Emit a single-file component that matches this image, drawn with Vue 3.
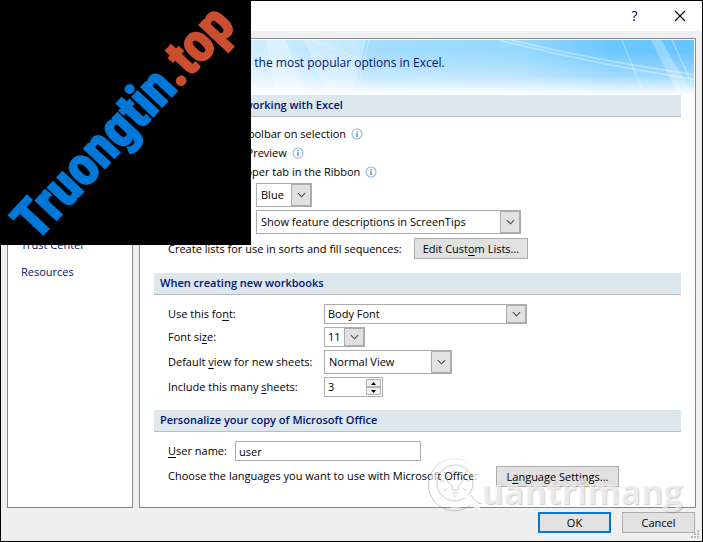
<script setup>
import { ref } from 'vue'

const scheme = ref('Blue')
const tipStyle = ref('Show feature descriptions in ScreenTips')
const font = ref('Body Font')
const size = ref('11')
const view = ref('Normal View')
const sheets = ref(3)
const user = ref('user')
const categories = ['Popular', 'Formulas', 'Proofing', 'Save', 'Advanced', 'Customize', 'Add-Ins', 'Trust Center', 'Resources']
const toggles = ref([
  { label: 'Show Mini Toolbar on selection', on: true },
  { label: 'Enable Live Preview', on: true },
  { label: 'Show Developer tab in the Ribbon', on: false },
])
</script>

<template>
  <main class="dialog">
    <header class="titlebar">
      <button class="cap" aria-label="Help">?</button>
      <button class="cap" aria-label="Close">
        <svg width="12" height="12" viewBox="0 0 12 12"><path d="M1 1 11 11M11 1 1 11" stroke="#000" stroke-width="1.1" /></svg>
      </button>
    </header>

    <div class="body">
      <nav class="nav">
        <a v-for="c in categories" :key="c" href="#">{{ c }}</a>
      </nav>

      <div class="panel">
        <div class="banner">
          <svg class="sky" viewBox="0 0 553 56" preserveAspectRatio="none" aria-hidden="true">
            <defs>
              <linearGradient id="h" x1="0" x2="1" y1="0" y2="0">
                <stop offset="0" stop-color="#e2f4ff" /><stop offset=".25" stop-color="#cdecff" />
                <stop offset=".42" stop-color="#a4dcff" /><stop offset=".68" stop-color="#98d8ff" />
                <stop offset=".85" stop-color="#6cc7ff" /><stop offset="1" stop-color="#66c4ff" />
              </linearGradient>
              <linearGradient id="v" x1="0" x2="0" y1="0" y2="1">
                <stop offset=".2" stop-color="#fff" stop-opacity="0" /><stop offset=".65" stop-color="#fff" stop-opacity=".35" />
                <stop offset="1" stop-color="#fff" />
              </linearGradient>
            </defs>
            <path d="M0 0H553V56H0z" fill="url(#h)" />
            <g fill="#fff" fill-opacity=".28">
              <path d="M125 0h20l22 56h-32zM163 0h52l-14 56h-14zM215 0h10l-14 56h-10z" />
              <path d="M510 0h10l32 56h-15z" />
            </g>
            <g fill="none" stroke="#fff" stroke-opacity=".32">
              <path d="M171 0 220 20M228 0 216 56" />
              <path d="M358 0 Q450 24 553 40" stroke-width="2" /><path d="M370 0 Q460 22 553 35" stroke-width="2" />
              <path d="M481 0 503 56M531 0 551 45" stroke-width="1.5" />
            </g>
            <path d="M0 0H553V56H0z" fill="url(#v)" />
          </svg>
          <h1>Change the most popular options in Excel.</h1>
        </div>

        <section>
          <h2>Top options for working with Excel</h2>
          <div class="rows">
            <label v-for="t in toggles" :key="t.label" class="toggle">
              <input v-model="t.on" type="checkbox" />
              <span>{{ t.label }}</span>
              <svg width="12" height="12" viewBox="0 0 12 12" aria-hidden="true">
                <circle cx="6" cy="6" r="5" fill="#fff" stroke="#8fb4de" stroke-width="1.1" />
                <path d="M6 3v1.2M6 5.2V9" stroke="#456fa5" stroke-width="1.2" />
              </svg>
            </label>
            <div class="row tall">
              <label class="short" for="scheme">Color scheme:</label>
              <span class="combo w-blue"><select id="scheme" v-model="scheme"><option>Blue</option></select><i><svg viewBox="0 0 10 6"><path d="M1 1 5 5 9 1" /></svg></i></span>
            </div>
            <div class="row tall">
              <label class="short" for="tip">ScreenTip style:</label>
              <span class="combo w-tip"><select id="tip" v-model="tipStyle"><option>Show feature descriptions in ScreenTips</option></select><i><svg viewBox="0 0 10 6"><path d="M1 1 5 5 9 1" /></svg></i></span>
            </div>
            <div class="row list">
              <span class="wide">Create lists for use in sorts and fill sequences:</span>
              <button class="btn lists">Edit Cust<u>o</u>m Lists...</button>
            </div>
          </div>
        </section>

        <section>
          <h2>When creating new workbooks</h2>
          <div class="rows">
            <div class="row">
              <label class="mid" for="font">Use this fo<u>n</u>t:</label>
              <span class="combo w-font"><select id="font" v-model="font"><option>Body Font</option></select><i><svg viewBox="0 0 10 6"><path d="M1 1 5 5 9 1" /></svg></i></span>
            </div>
            <div class="row">
              <label class="mid" for="size">Font si<u>z</u>e:</label>
              <span class="combo w-size"><select id="size" v-model="size"><option>11</option></select><i><svg viewBox="0 0 10 6"><path d="M1 1 5 5 9 1" /></svg></i></span>
            </div>
            <div class="row tall">
              <label class="mid" for="view">Default <u>v</u>iew for new sheets:</label>
              <span class="combo w-view"><select id="view" v-model="view"><option>Normal View</option></select><i><svg viewBox="0 0 10 6"><path d="M1 1 5 5 9 1" /></svg></i></span>
            </div>
            <div class="row">
              <label class="mid" for="sheets">Include this many <u>s</u>heets:</label>
              <span class="spin">
                <input id="sheets" v-model="sheets" type="text" />
                <span class="steps">
                  <button aria-label="More" @click="sheets++"><svg width="5" height="3" viewBox="0 0 5 3"><path d="M0 3 2.500 0 5 3z" /></svg></button>
                  <button aria-label="Fewer" @click="sheets--"><svg width="5" height="3" viewBox="0 0 5 3"><path d="M0 0 2.500 3 5 0z" /></svg></button>
                </span>
              </span>
            </div>
          </div>
        </section>

        <section>
          <h2>Personalize your copy of Microsoft Office</h2>
          <div class="rows">
            <div class="row">
              <label class="name" for="user"><u>U</u>ser name:</label>
              <input id="user" v-model="user" class="text" type="text" />
            </div>
            <div class="row tall">
              <span class="lang">Choose the languages you want to use with Microsoft Office:</span>
              <button class="btn langs">L<u>a</u>nguage Settings...</button>
            </div>
          </div>
        </section>
      </div>
    </div>

    <footer class="actions">
      <button class="btn action primary">OK</button>
      <button class="btn action">Cancel</button>
    </footer>

    <svg class="grip" width="9" height="9" viewBox="0 0 9 9" fill="#bdbdbd" aria-hidden="true">
      <path d="M6 0h2v2H6zM3 3h2v2H3zM6 3h2v2H6zM0 6h2v2H0zM3 6h2v2H3zM6 6h2v2H6z" />
    </svg>

    <div class="watermark">
      <svg width="56" height="58" viewBox="0 0 56 58" fill="none" aria-hidden="true">
        <g stroke="#888" stroke-opacity=".45" transform="translate(0 1)">
          <path d="M39 5A26 26 0 1 0 44 47" /><circle cx="27" cy="26" r="18" />
        </g>
        <circle cx="27" cy="27" r="22" stroke="#fff" stroke-opacity=".6" stroke-width="6" />
        <g stroke="#aaa" stroke-opacity=".6">
          <path d="M24 34v-4q-5-3-5-7a8 8 0 0 1 16 0q0 4-5 7v4zM24 37h6M25 40h4M15 15l3 3M39 15l-3 3M12 25h4M42 25h-4M16 35l3-3M38 35l-3-3" />
        </g>
        <path d="M38 40Q44 50 52 51" stroke="#fff" stroke-opacity=".8" stroke-width="5" />
        <path d="M43 39Q47 47 54 48" stroke="#888" stroke-opacity=".45" />
      </svg>
      <span>uantrimang</span>
    </div>

    <div class="stamp"><p>Truongtin<b>.top</b></p></div>
  </main>
</template>

<style>
body { margin: 0; }
</style>

<style scoped>
* { box-sizing: border-box; }
.dialog {
  position: relative;
  display: flex;
  flex-direction: column;
  min-height: 100vh;
  overflow: hidden;
  border: 1px solid #000;
  background: #efefef;
  color: #000;
  font: 11px/16px "Open Sans", "Noto Sans", sans-serif;
}
button, input, select { margin: 0; font: inherit; color: inherit; border-radius: 0; }
u { text-underline-offset: 2px; }
.titlebar {
  display: flex;
  justify-content: flex-end;
  height: 30px;
  background: #fff;
}
.cap {
  display: flex;
  align-items: center;
  justify-content: center;
  width: 45px;
  padding: 0;
  border: 0;
  background: none;
  font-size: 14px;
}
.body {
  flex: 1;
  display: flex;
  gap: 6px;
  padding: 7px 6px 0;
}
.nav, .panel { border: 1px solid #828790; background: #fff; }
.nav {
  flex: none;
  display: flex;
  flex-direction: column;
  gap: 11px;
  width: 126px;
  padding: 9px 13px;
}
.nav a { color: #00156e; text-decoration: none; }
.panel { flex: 1; min-width: 0; padding: 1px; }
.banner { position: relative; display: flex; align-items: center; height: 55px; padding: 0 68px; }
.sky { position: absolute; inset: 0; width: 100%; height: 100%; }
h1 { position: relative; margin: 0; padding-bottom: 10px; color: #00156e; font-size: 12px; font-weight: 400; }
section { padding: 0 13px 13px; }
h2 {
  margin: 0;
  padding: 1px 6px 2px;
  border-bottom: 1px solid #b8bcc0;
  background: #dde7ee;
  color: #00156e;
  font-size: 11px;
  line-height: 18px;
  font-weight: 600;
}
.rows { display: flex; flex-direction: column; gap: 3px; padding: 9px 0 0 14px; }
.toggle { display: flex; align-items: center; gap: 5px; }
.toggle input { width: 13px; height: 13px; }
.row { display: flex; align-items: center; height: 20px; }
.row.tall { height: 24px; }
.row.list { height: 23px; }
.short { width: 88px; }
.mid { width: 156px; }
.name { width: 67px; }
.wide { width: 246px; }
.lang { width: 328px; white-space: nowrap; }
.combo {
  display: flex;
  height: 100%;
  border: 1px solid #ababb0;
  background: #fff;
}
.combo select {
  flex: 1;
  min-width: 0;
  padding: 0 3px;
  border: 0;
  outline: 0;
  appearance: none;
  background: none;
}
.tall .combo select { padding: 0 4px; }
.combo i {
  display: flex;
  align-items: center;
  justify-content: center;
  width: 20px;
  border: 1px solid #ababb0;
  background: #e1e1e1;
}
.combo i svg { width: 9px; height: 6px; fill: none; stroke: #444; stroke-width: 1.2; }
.w-blue { width: 56px; }
.w-tip { width: 265px; }
.w-font { width: 203px; }
.w-size { width: 41px; }
.w-view { width: 128px; }
.spin {
  display: flex;
  width: 59px;
  height: 100%;
  border: 1px solid #ababb0;
}
.spin input { flex: 1; min-width: 0; padding: 0 3px; border: 0; outline: 0; background: none; }
.steps { display: flex; flex-direction: column; width: 16px; padding: 1px 1px 1px 0; }
.steps button {
  flex: 1;
  display: flex;
  align-items: center;
  justify-content: center;
  padding: 0;
  border: 1px solid #b4b4b4;
  background: #f0f0f0;
}
.text { width: 186px; height: 20px; padding: 0 3px; border: 1px solid #ababb0; outline: 0; }
.btn {
  height: 21px;
  padding: 0;
  border: 1px solid #adadad;
  background: #e1e1e1;
  line-height: 17px;
}
.lists { width: 114px; }
.langs { width: 123px; }
.actions {
  display: flex;
  justify-content: flex-end;
  gap: 11px;
  padding: 4px 7px 8px;
}
.action { width: 73px; }
.primary { border: 2px solid #0078d7; }
.grip { position: absolute; right: 2px; bottom: 2px; }
.watermark {
  position: absolute;
  left: 427px;
  top: 455px;
  display: flex;
  align-items: center;
  pointer-events: none;
}
.watermark span {
  margin-left: -3px;
  padding-top: 12px;
  color: rgba(255, 255, 255, 0.6);
  font: 700 34px/46px "Open Sans", sans-serif;
  text-shadow: 1px 1px 1px rgba(90, 90, 90, 0.3);
}
.stamp {
  position: absolute;
  left: -1px;
  top: -1px;
  width: 251px;
  height: 245px;
  overflow: hidden;
  background: #000;
}
.stamp p {
  position: absolute;
  left: 41px;
  top: 197px;
  margin: 0;
  color: #0078d7;
  font: 700 54px/50px "Liberation Sans Narrow", "Roboto Condensed", "Open Sans Condensed", "Liberation Sans", sans-serif;
  -webkit-text-stroke: 2px currentColor;
  white-space: nowrap;
  transform: rotate(-47deg);
  transform-origin: 0 100%;
}
.stamp b { color: #cb4f2f; font-weight: inherit; }
</style>
